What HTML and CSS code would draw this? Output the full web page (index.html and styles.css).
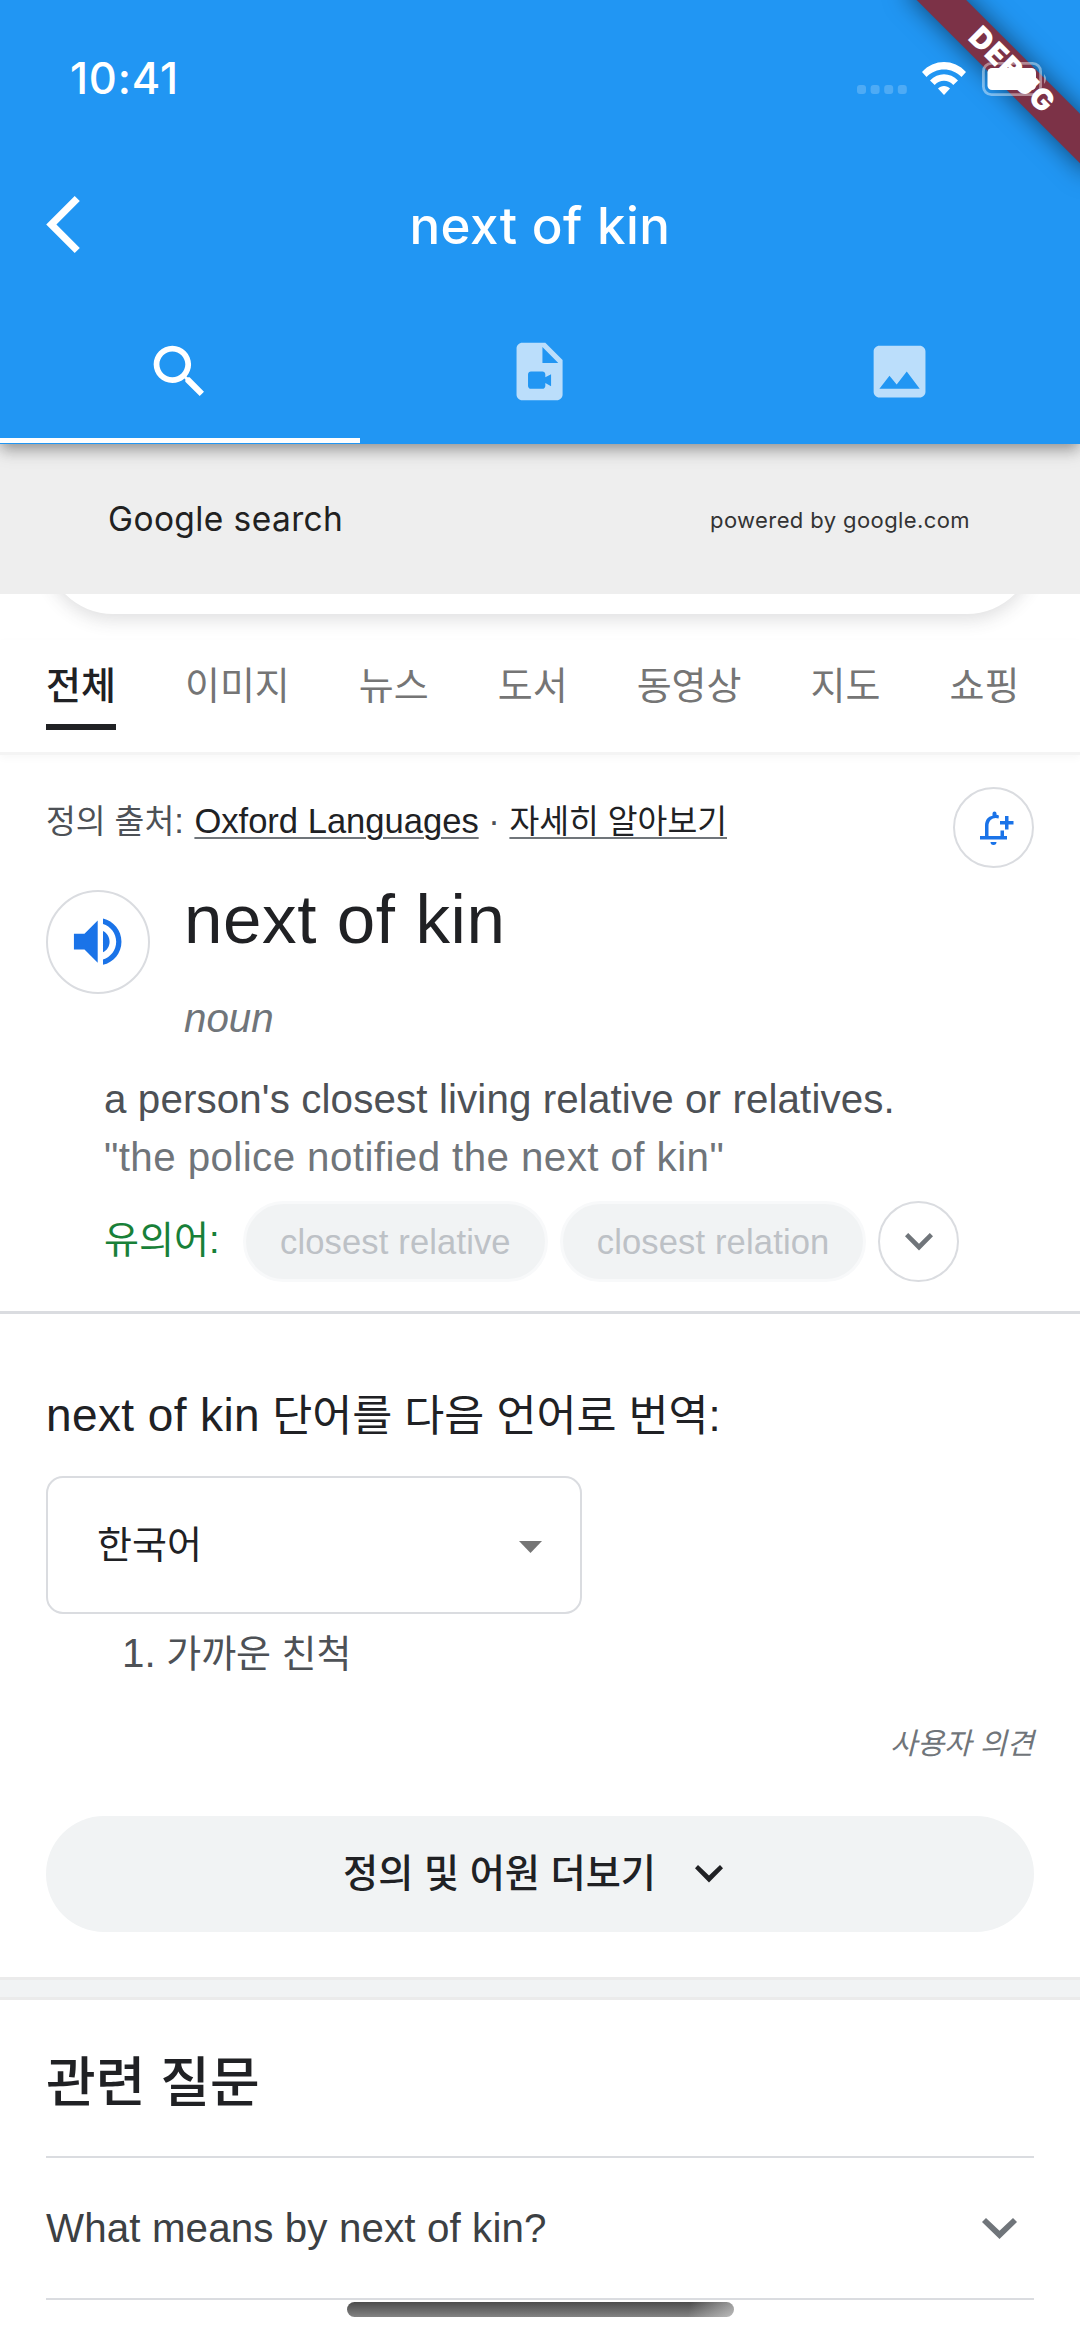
FILE: index.html
```html
<!DOCTYPE html>
<html lang="ko">
<head>
<meta charset="utf-8">
<title>next of kin</title>
<link rel="stylesheet" href="styles.css">
</head>
<body>
<div class="screen">
  <header class="appbar">
    <div class="debug"><span>DEBUG</span></div>
    <div class="status">
      <span class="time">10:41</span>
      <div class="indicators">
        <svg class="dots" viewBox="0 0 50 9"><rect width="9" height="9" rx="3"/><rect x="13.6" width="9" height="9" rx="3"/><rect x="27.2" width="9" height="9" rx="3"/><rect x="40.8" width="9" height="9" rx="3"/></svg>
        <svg class="wifi" viewBox="0 0 44 33"><path d="M0 10C12-3.300 32-3.300 44 10L39.500 15C30 5 14 5 4.500 15Z"/><path d="M8 18.500C16 10 28 10 36 18.500L31.300 23C26 17.400 18 17.400 12.700 23Z"/><path d="M16 26.500C19 23 25 23 28 26.500L22 33Z"/></svg>
        <svg class="battery" viewBox="0 0 66 34"><rect x="1.400" y="1.400" width="57.200" height="31.200" rx="8" fill="none" stroke="#fff" stroke-opacity=".42" stroke-width="2.800"/><rect x="5.500" y="6" width="48.500" height="22" rx="4.500"/><path d="M62 12Q66 17 62 22Z" fill-opacity=".45"/></svg>
      </div>
    </div>
    <div class="toolbar">
      <svg class="back" viewBox="0 0 11.670 19.800"><path d="M11.670 1.770 9.900 0 0 9.900l9.900 9.900 1.770-1.770L3.540 9.900z"/></svg>
      <h1 class="title">next of kin</h1>
    </div>
    <nav class="tabs">
      <div class="tab active"><svg viewBox="0 0 24 24"><path d="M15.500 14h-.79l-.28-.27C15.410 12.590 16 11.110 16 9.500 16 5.910 13.090 3 9.500 3S3 5.910 3 9.500 5.910 16 9.500 16c1.610 0 3.090-.59 4.230-1.570l.27.28v.79l5 4.990L20.490 19l-4.990-5zm-6 0C7.010 14 5 11.990 5 9.500S7.010 5 9.500 5 14 7.010 14 9.500 11.990 14 9.500 14z"/></svg></div>
      <div class="tab"><svg viewBox="0 0 24 24"><path d="M14 2H6c-1.100 0-1.990.9-1.990 2L4 20c0 1.100.890 2 1.990 2H18c1.100 0 2-.9 2-2V8l-6-6zm-1 7V3.500L18.500 9H13zm1 5l2-1.060v4.120L14 16v1c0 .55-.45 1-1 1H9c-.55 0-1-.45-1-1v-4c0-.55.45-1 1-1h4c.55 0 1 .45 1 1v1z"/></svg></div>
      <div class="tab"><svg viewBox="0 0 24 24"><path d="M21 19V5c0-1.100-.9-2-2-2H5c-1.100 0-2 .9-2 2v14c0 1.100.9 2 2 2h14c1.100 0 2-.9 2-2zM8.500 13.500l2.500 3.010L14.500 12l4.500 6H5l3.500-4.500z"/></svg></div>
    </nav>
  </header>

  <div class="source">
    <span class="source-name">Google search</span>
    <span class="powered">powered by google.com</span>
  </div>

  <main class="web">
    <div class="searchbox-clip"><div class="searchbox"></div></div>
    <nav class="filters">
      <a class="filter current">전체</a><a class="filter">이미지</a><a class="filter">뉴스</a><a class="filter">도서</a><a class="filter">동영상</a><a class="filter">지도</a><a class="filter">쇼핑</a>
    </nav>

    <section class="definition">
      <div class="attribution">
        <p class="credit"><span class="ko">정의 출처</span>: <u class="oxford">Oxford Languages</u> <span class="mid">·</span> <u class="ko learn">자세히 알아보기</u></p>
        <span class="round bell"><svg viewBox="0 0 34 34"><path d="M5 25V15C5 9 8 5.500 12.500 4.800V2.500a2 2 0 0 1 4 0V3.800Q18 4 19 4.800L18.500 7.500C14 5.500 8.500 8.500 8.500 15V25ZM0 25H27V28.500H0ZM20.500 19.500H24V27H20.500ZM25 5h3.500v5H33.500v3.500H28.500v5H25v-5H20V10H25ZM10.500 31H16.500A3 3 0 0 1 10.500 31Z"/></svg></span>
      </div>
      <div class="entry">
        <span class="round speaker"><svg viewBox="0 0 24 24"><path d="M3 9v6h4l5 5V4L7 9H3zm13.500 3c0-1.770-1.020-3.290-2.500-4.030v8.050c1.480-.73 2.500-2.250 2.500-4.020zM14 3.230v2.060c2.890.860 5 3.540 5 6.710s-2.110 5.850-5 6.710v2.060c4.010-.91 7-4.490 7-8.770s-2.990-7.860-7-8.770z"/></svg></span>
        <div class="head">
          <h2 class="word">next of kin</h2>
          <p class="pos">noun</p>
        </div>
      </div>
      <div class="sense">
        <p class="meaning">a person's closest living relative or relatives.</p>
        <p class="example">"the police notified the next of kin"</p>
        <div class="synonyms">
          <span class="syn-label">유의어:</span>
          <span class="chip">closest relative</span>
          <span class="chip second">closest relation</span>
          <span class="round more"><svg viewBox="0 0 28 18"><path d="M3.200 0 14 10.800 24.800 0 28 3.200 14 17.600 0 3.200Z"/></svg></span>
        </div>
      </div>
    </section>

    <section class="translate">
      <h3 class="translate-title"><span class="latin">next of kin</span> 단어를 다음 언어로 번역:</h3>
      <div class="select"><span>한국어</span><svg viewBox="0 0 23 12"><path d="M0 0H23L11.500 12Z"/></svg></div>
      <p class="result"><span class="num">1.</span> 가까운 친척</p>
      <p class="feedback">사용자 의견</p>
      <div class="expand"><span>정의 및 어원 더보기</span><svg viewBox="0 0 28 18"><path d="M3 0 14 10.500 25 0 28 3.200 14 17.600 0 3.200Z"/></svg></div>
    </section>

    <div class="band"></div>

    <section class="related">
      <h3 class="related-title">관련 질문</h3>
      <div class="question"><span>What means by next of kin?</span><svg viewBox="0 0 35 21"><path d="M4 0 17.500 12.800 31 0 35 4 17.500 21 0 4Z"/></svg></div>
    </section>
  </main>
  <div class="home"></div>
</div>
</body>
</html>
```
FILE: styles.css
```css
* { box-sizing: border-box; }
body, h1, h2, h3, p { margin: 0; font-weight: 400; }
body { background: #fff; }
svg { display: block; flex: none; }
span, a, u, h1, h2, h3, p { white-space: nowrap; }

.screen {
  position: relative;
  width: 1080px;
  height: 2340px;
  overflow: hidden;
  background: #fff;
  font-family: "Liberation Sans", "Noto Sans CJK KR", sans-serif;
  color: #202124;
}

/* app bar */
.appbar {
  position: relative;
  z-index: 2;
  height: 443.500px;
  background: #2196f3;
  box-shadow: 0 6px 12px -3px rgba(0,0,0,.2), 0 12px 15px rgba(0,0,0,.08), 0 3px 16px rgba(0,0,0,.2);
  color: #fff;
  clip-path: inset(0 0 -40px 0);
}
.status {
  position: relative;
  height: 144px;
  padding: 0 32px 0 70px;
  display: flex;
  justify-content: space-between;
}
.time {
  font: 500 43.500px/50px "Inter", sans-serif;
  letter-spacing: .8px;
  padding-top: 53px;
}
.indicators { display: flex; align-items: flex-start; fill: #fff; }
.dots { width: 50px; height: 9px; margin-top: 85px; opacity: .2; }
.wifi { width: 44px; height: 33px; margin: 62px 16px 0 15px; }
.battery { width: 66px; height: 34px; margin-top: 62px; }
.debug {
  position: absolute;
  top: 52px;
  left: 881px;
  width: 260px;
  height: 34.600px;
  transform: rotate(45deg);
  display: flex;
  justify-content: center;
  align-items: center;
  background: #7c3247;
  box-shadow: 0 0 26px rgba(0,0,0,.55);
}
.debug span { font: 900 29.400px/34px "Inter", sans-serif; letter-spacing: 1.100px; padding-left: 3px; }
.toolbar {
  height: 161.300px;
  padding: 0 46px;
  display: grid;
  grid-template-columns: 34px 1fr 34px;
  align-items: center;
}
.back { width: 34px; height: 57px; fill: #fff; }
.title { font: 500 51px/60px "Inter", sans-serif; letter-spacing: .5px; padding-top: 2px; text-align: center; }
.tabs { display: grid; grid-template-columns: repeat(3, 1fr); height: 138.200px; }
.tab { display: flex; justify-content: center; align-items: center; border-bottom: 5.760px solid transparent; }
.tab svg { width: 69.120px; height: 69.120px; fill: #bbdefb; }
.tab.active { border-bottom-color: #fff; }
.tab.active svg { fill: #fff; }

/* source strip */
.source {
  height: 150px;
  background: #eee;
  padding: 0 110px 0 108px;
  display: flex;
  justify-content: space-between;
  align-items: center;
  font-family: "Inter", sans-serif;
  color: #212121;
}
.source-name { font-size: 33.500px; letter-spacing: .4px; }
.powered { font-size: 22px; letter-spacing: .4px; color: #333; padding-top: 2px; }

/* web page */
.searchbox-clip { height: 46px; overflow: hidden; padding: 0 46px; }
.searchbox {
  height: 134px;
  margin-top: -114px;
  border-radius: 67px;
  background: #fff;
  box-shadow: 0 6px 17px rgba(60,64,67,.16);
}
.filters {
  height: 115px;
  padding: 16px 0 0 46px;
  display: flex;
  gap: 69px;
  border-bottom: 3px solid #f4f4f4;
  box-shadow: 0 3px 8px rgba(0,0,0,.03);
  font-size: 38px;
  color: #757575;
}
.filter { line-height: 61px; height: 74px; }
.current { color: #202124; font-weight: 500; border-bottom: 6px solid #202124; }

.definition { height: 559.500px; border-bottom: 3px solid #dadce0; padding: 32.500px 46px 0; }
.attribution { display: flex; justify-content: space-between; height: 103px; }
.credit { font-size: 34.560px; line-height: 68px; color: #4d5156; }
.credit .ko { font-size: 32.400px; }
.oxford { margin-left: 1px; }
.credit u {
  color: #202124;
  text-decoration-color: #70757a;
  text-decoration-thickness: 2px;
  text-underline-offset: 4px;
}
.round {
  width: 81px;
  height: 81px;
  border: 2.880px solid #dadce0;
  border-radius: 50%;
  display: flex;
  justify-content: center;
  align-items: center;
  flex: none;
}
.bell svg { width: 34px; height: 34px; fill: #1a73e8; margin-left: 6px; }
.entry { display: flex; gap: 34px; height: 181px; }
.speaker { width: 104px; height: 104px; }
.speaker svg { width: 63.400px; height: 63.400px; fill: #1a73e8; }
.word { font-size: 69.120px; line-height: 80px; letter-spacing: .6px; margin-top: -11px; }
.pos { font-size: 40.320px; line-height: 46px; margin-top: 36px; font-style: italic; color: #70757a; }
.sense { padding-left: 58px; }
.meaning, .example { font-size: 40.320px; line-height: 57.600px; letter-spacing: .12px; color: #4d5156; }
.example { color: #70757a; letter-spacing: .42px; }
.synonyms { display: flex; align-items: center; height: 81px; margin-top: 15px; }
.syn-label { font-size: 38px; color: #188038; width: 139px; margin-top: -10px; }
.chip {
  height: 81px;
  line-height: 76px;
  padding: 0 34px;
  border: 3px solid #f8f9fa;
  border-radius: 41px;
  background: #f1f3f4;
  color: #bdc1c6;
  font-size: 34.560px;
  letter-spacing: .14px;
}
.second { margin: 0 12px 0 12px; }
.more svg { width: 28px; height: 18px; fill: #70757a; }

.translate { padding: 71px 46px 0; height: 662.500px; }
.translate-title { font-size: 43.500px; line-height: 60px; }
.latin { font-size: 46px; letter-spacing: .4px; }
.select {
  width: 536px;
  height: 138px;
  margin-top: 30px;
  border: 2.880px solid #dadce0;
  border-radius: 17px;
  padding: 0 38px 0 49px;
  display: flex;
  justify-content: space-between;
  align-items: center;
  font-size: 38px;
}
.select span { padding-bottom: 8px; }
.select svg { width: 23px; height: 12px; fill: #757575; margin-top: 4px; }
.result { font-size: 38px; line-height: 58px; margin: 10px 0 0 76px; color: #4d5156; }
.num { font-size: 40.320px; }
.feedback { font-size: 29.500px; line-height: 42px; margin-top: 40px; text-align: right; font-style: italic; color: #70757a; }
.expand {
  height: 116px;
  margin-top: 51px;
  padding-right: 14px;
  border-radius: 58px;
  background: #f1f3f4;
  display: flex;
  justify-content: center;
  align-items: center;
  gap: 39px;
  font-size: 38.200px;
  font-weight: 500;
}
.expand span { padding-bottom: 7px; }
.expand svg { width: 28px; height: 18px; fill: #202124; }

.band { height: 23px; background: #f1f3f4; border-top: 3px solid #ebebeb; border-bottom: 3px solid #ebebeb; }
.related { padding: 0 46px; }
.related-title { font-size: 54px; font-weight: 500; line-height: 80px; padding-top: 43px; height: 156px; }
.question {
  height: 144px;
  border-top: 2.880px solid #dadce0;
  border-bottom: 2.880px solid #dadce0;
  padding: 2px 17px 0 0;
  display: flex;
  justify-content: space-between;
  align-items: center;
  font-size: 40.320px;
  letter-spacing: .12px;
  color: #3c4043;
}
.question svg { width: 35px; height: 21px; fill: #70757a; }

.home {
  position: absolute;
  left: 347px;
  top: 2302px;
  width: 387px;
  height: 15px;
  border-radius: 7.500px;
  background: linear-gradient(100deg, transparent 88%, rgba(255,255,255,.45)), linear-gradient(#4c4c4c, #838383);
}
```
